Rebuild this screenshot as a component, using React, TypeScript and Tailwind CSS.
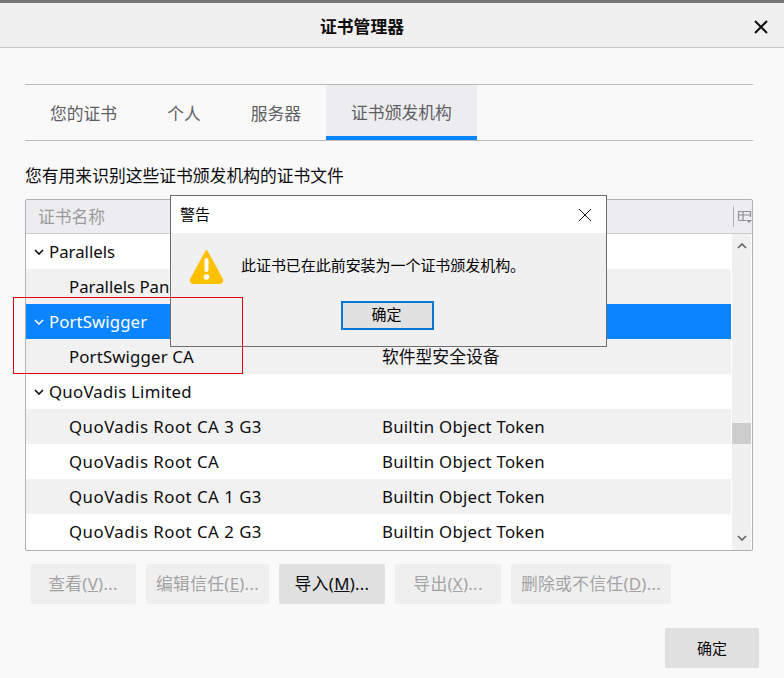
import React from "react";

const font = { fontFamily: '"Noto Sans", "Noto Sans CJK SC", sans-serif' };

const rows: { t: "g" | "c"; name: string; val?: string; bg: string; sel?: boolean; track: string }[] = [
  { t: "g", name: "Parallels", bg: "bg-white", track: "tracking-normal" },
  { t: "c", name: "Parallels Panel", val: "", bg: "bg-[#f1f1f1]", track: "tracking-normal" },
  { t: "g", name: "PortSwigger", bg: "bg-[#0a84ff]", sel: true, track: "tracking-[0.1px]" },
  { t: "c", name: "PortSwigger CA", val: "软件型安全设备", bg: "bg-[#f1f1f1]", track: "tracking-[0.15px]" },
  { t: "g", name: "QuoVadis Limited", bg: "bg-white", track: "tracking-[0.25px]" },
  { t: "c", name: "QuoVadis Root CA 3 G3", val: "Builtin Object Token", bg: "bg-[#f1f1f1]", track: "tracking-[0.5px]" },
  { t: "c", name: "QuoVadis Root CA", val: "Builtin Object Token", bg: "bg-white", track: "tracking-[0.5px]" },
  { t: "c", name: "QuoVadis Root CA 1 G3", val: "Builtin Object Token", bg: "bg-[#f1f1f1]", track: "tracking-[0.5px]" },
  { t: "c", name: "QuoVadis Root CA 2 G3", val: "Builtin Object Token", bg: "bg-white", track: "tracking-[0.5px]" },
];

function Chevron({ color = "#0c0c0d" }: { color?: string }) {
  return (
    <svg width="10" height="6" viewBox="0 0 10 6" fill="none" className="shrink-0">
      <path d="M1 1l4 4 4-4" stroke={color} strokeWidth="1.6" />
    </svg>
  );
}

function Btn({ pre, k, w, active }: { pre: string; k: string; w: string; active?: boolean }) {
  return (
    <div
      className={`${w} h-10 rounded-[2px] flex items-center justify-center text-[16.8px] tracking-[0.3px] ${
        active ? "bg-[#e0e0e1] text-[#0c0c0d]" : "bg-[#efefef] text-[#a3a3a3]"
      }`}
    >
      <span>
        {pre}(<span className="underline">{k}</span>)...
      </span>
    </div>
  );
}

export default function App() {
  return (
    <div className="relative w-[784px] h-[678px] overflow-hidden bg-[#f9f9fa] flex flex-col text-[#0c0c0d]" style={font}>
      <div className="h-[3px] bg-[#757575]" />
      <div className="relative h-[45px] bg-[#f0f0f0] border-b border-[#c4c4c4] flex items-center justify-center pr-[60px] pt-[3px]">
        <span className="text-[16.8px] font-bold text-[#0c0c0d]">证书管理器</span>
        <svg width="14" height="14" viewBox="0 0 14 14" className="absolute right-[16px] top-[17px]">
          <path d="M1 1l12 12M13 1L1 13" stroke="#111" strokeWidth="2" />
        </svg>
      </div>

      <div className="flex flex-col flex-1 px-[25px] pr-[31px]">
        <div className="mt-[36px] h-[57px] border-y border-[#b9b9b9] flex text-[16.8px] text-[#5f5f63]">
          <div className="px-[25px] flex items-center pt-[3px]">您的证书</div>
          <div className="px-[25px] flex items-center pt-[3px]">个人</div>
          <div className="px-[25px] flex items-center pt-[3px]">服务器</div>
          <div className="px-[25px] flex items-center bg-[#ededf0] border-b-4 border-[#0a84ff] pt-[5px]">证书颁发机构</div>
        </div>

        <div className="mt-[23px] h-[35px] text-[16.8px] leading-[24px] text-[#0c0c0d]">您有用来识别这些证书颁发机构的证书文件</div>

        <div className="h-[352px] border border-[#b1b1b3] rounded-[2px] flex flex-col bg-white">
          <div className="h-[34px] bg-[#ededf0] border-b border-[#cccccc] flex items-center pl-[12px] text-[16.8px] text-[#9b9b9f]">
            <span className="flex-1">证书名称</span>
            <div className="w-px h-[21px] bg-[#b1b1b3]" />
            <svg width="14" height="14" viewBox="0 0 14 14" fill="none" className="ml-[4px]">
              <path d="M.5 10V1.5h12V7M.5 5h12M5 1.5v9M.5 10.5H8" stroke="#8f8f93" strokeWidth="1.2" />
              <path d="M8 10h6l-3 3z" fill="#8f8f93" />
            </svg>
          </div>
          <div className="flex flex-1 min-h-0">
            <div className="w-[705px] flex flex-col">
              {rows.map((r, i) => (
                <div key={i} className={`h-[35px] shrink-0 flex items-center text-[16.8px] ${r.bg} ${r.sel ? "text-white" : "text-[#0c0c0d]"}`}>
                  {r.t === "g" ? (
                    <div className="pl-[8px] flex items-center gap-[5px]">
                      <Chevron color={r.sel ? "#ffffff" : "#0c0c0d"} />
                      <span className={r.track}>{r.name}</span>
                    </div>
                  ) : (
                    <>
                      <span className={`pl-[43px] w-[356px] shrink-0 ${r.track}`}>{r.name}</span>
                      <span className={r.val === "软件型安全设备" ? "tracking-normal" : "tracking-[0.25px]"}>{r.val}</span>
                    </>
                  )}
                </div>
              ))}
            </div>
            <div className="w-[19px] ml-[1px] bg-[#f0f0f0] relative flex flex-col items-center justify-between py-[9px]">
              <svg width="10" height="6" viewBox="0 0 10 6" fill="none">
                <path d="M1 5l4-4 4 4" stroke="#606060" strokeWidth="1.6" />
              </svg>
              <div className="absolute top-[189px] left-0 w-full h-[21px] bg-[#cdcdcd]" />
              <svg width="10" height="6" viewBox="0 0 10 6" fill="none">
                <path d="M1 1l4 4 4-4" stroke="#606060" strokeWidth="1.6" />
              </svg>
            </div>
          </div>
        </div>

        <div className="mt-[13px] ml-[5px] flex gap-[10px]">
          <Btn pre="查看" k="V" w="w-[106px]" />
          <Btn pre="编辑信任" k="E" w="w-[123px]" />
          <Btn pre="导入" k="M" w="w-[106px]" active />
          <Btn pre="导出" k="X" w="w-[106px]" />
          <Btn pre="删除或不信任" k="D" w="w-[160px]" />
        </div>

        <div className="mt-[24px] flex justify-end -mr-[6px]">
          <div className="w-[94px] h-10 rounded-[2px] bg-[#e0e0e1] flex items-center justify-center text-[15px]">确定</div>
        </div>
      </div>

      {/* alert dialog */}
      <div className="absolute left-[170px] top-[195px] w-[437px] h-[152px] border border-[#6e6e6e] bg-[#f0f0f0] flex flex-col">
        <div className="h-[37px] bg-white flex items-center justify-between pl-[9px] pr-[14px] text-[15px] text-black">
          <span>警告</span>
          <svg width="14" height="14" viewBox="0 0 14 14">
            <path d="M1 1l12 12M13 1L1 13" stroke="#111" strokeWidth="1" />
          </svg>
        </div>
        <div className="flex items-center pl-[18px] mt-[16px] gap-[17px] text-[15px] text-black">
          <svg width="35" height="36" viewBox="0 0 35 36">
            <path d="M17.5 2L33 30.5a2.5 2.5 0 0 1-2.2 3.5H4.2A2.5 2.5 0 0 1 2 30.5z" fill="#ffc000" stroke="#ffc000" strokeWidth="2" strokeLinejoin="round" />
            <rect x="15.5" y="9" width="4" height="14" rx="2" fill="#fff" />
            <circle cx="17.5" cy="28" r="2.8" fill="#fff" />
          </svg>
          <span className="-translate-y-[2px] tracking-[-0.05px]">此证书已在此前安装为一个证书颁发机构。</span>
        </div>
        <div className="mt-[16px] ml-[170px]">
          <div className="w-[93px] h-[29px] border-2 border-[#0078d7] bg-[#e1e1e1] flex items-center justify-center pr-[2px] pb-[2px] text-[15px] text-black">确定</div>
        </div>
      </div>

      {/* red annotation */}
      <div className="absolute left-[13px] top-[297px] w-[230px] h-[77px] border border-[#e60000]" />
    </div>
  );
}
